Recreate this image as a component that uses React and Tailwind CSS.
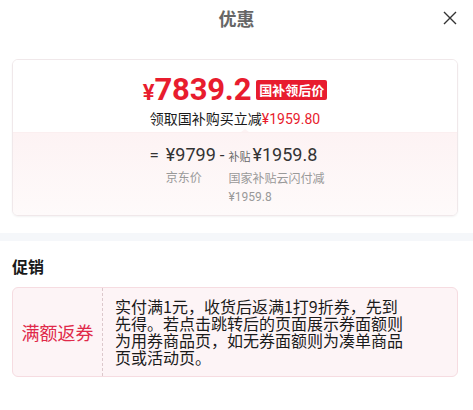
import React from "react";

const cjk = { fontFamily: '"Noto Sans CJK SC", "Noto Sans", sans-serif' };
const num = { fontFamily: 'Roboto, "Noto Sans CJK SC", sans-serif' };

export default function App() {
  return (
    <div className="w-[473px] h-[410px] bg-white overflow-hidden" style={cjk}>
      {/* header */}
      <div className="relative h-[35px] flex items-center justify-center">
        <span className="text-[18px] font-bold text-[#666] leading-none">优惠</span>
        <svg
          className="absolute right-[16px] top-[11px]"
          width="14"
          height="14"
          viewBox="0 0 14 14"
        >
          <path d="M1 1 L13 13 M13 1 L1 13" stroke="#333" strokeWidth="1.4" fill="none" />
        </svg>
      </div>

      {/* price card */}
      <div className="mt-[24px] ml-[12px] w-[446px] rounded-[6px] border border-[#f0e8ea] overflow-hidden shadow-[0_1px_2px_rgba(0,0,0,0.05)]">
        <div className="relative h-[72px] bg-white flex flex-col items-center pt-[14px]">
          <div className="flex items-center gap-[5px]">
            <div className="flex items-baseline text-[#e81c2e] font-bold" style={num}>
              <span className="text-[22px] leading-none">¥</span>
              <span className="text-[31px] leading-none tracking-[-0.2px]">7839.2</span>
            </div>
            <span className="h-[20px] px-[3px] rounded-[2px] bg-[#e81c2e] text-white text-[13px] font-bold leading-[20px] flex items-center">
              国补领后价
            </span>
          </div>
          <div className="mt-[4px] text-[14px] leading-[18px] text-[#1a1a1a]">
            领取国补购买立减<span className="text-[#e81c2e]" style={num}>¥1959.80</span>
          </div>
          <div className="absolute left-[228px] bottom-0 w-0 h-0 border-l-[4px] border-r-[4px] border-b-[3px] border-l-transparent border-r-transparent border-b-[#fdf3f4]" />
        </div>
        <div className="h-[83px] border-t border-[#fbeff0] bg-gradient-to-b from-[#fdf3f4] to-[#fefafa] flex justify-center pt-[10px] pl-[8px]">
          <div className="flex items-start text-[#333]">
            <span className="text-[17px] leading-[24px] mr-[7px]" style={num}>=</span>
            <div className="flex flex-col">
              <span className="text-[18px] leading-[24px] font-normal" style={num}>¥9799</span>
              <span className="text-[12px] leading-[18px] text-[#999] mt-[1px]">京东价</span>
            </div>
            <span className="text-[17px] leading-[24px] mx-[4px]" style={num}>-</span>
            <div className="flex flex-col w-[100px]">
              <span className="flex items-baseline leading-[24px]">
                <span className="text-[11px] text-[#666] mr-[2px]">补贴</span>
                <span className="text-[18px] font-normal" style={num}>¥1959.8</span>
              </span>
              <span className="text-[12px] leading-[18px] text-[#999] mt-[1px]">
                国家补贴云闪付减<span style={num}>¥1959.8</span>
              </span>
            </div>
          </div>
        </div>
      </div>

      {/* gray band */}
      <div className="mt-[17px] h-[8px] bg-[#f5f7fa]" />

      {/* promo */}
      <div className="ml-[12px] mt-[16px] text-[16px] font-bold leading-[18px] text-[#1a1a1a]">促销</div>
      <div className="mt-[12px] ml-[12px] w-[446px] h-[90px] rounded-[6px] border border-[#f6dce1] bg-[#fdf4f6] flex">
        <div className="w-[90px] border-r border-dashed border-[#dcc8cc] flex items-center justify-center">
          <span className="text-[18px] text-[#e0294a] leading-none">满额返券</span>
        </div>
        <div className="pl-[12px] pt-[10px]">
          <p className="w-[290px] text-[16px] leading-[17px] text-[#1a1a1a]">
            实付满1元，收货后返满1打9折券，先到先得。若点击跳转后的页面展示券面额则为用券商品页，如无券面额则为凑单商品页或活动页。
          </p>
        </div>
      </div>
    </div>
  );
}
